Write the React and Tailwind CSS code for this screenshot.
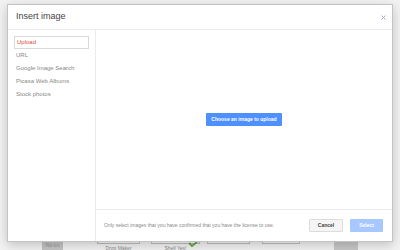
import React from "react";

const items = ["Upload", "URL", "Google Image Search", "Picasa Web Albums", "Stock photos"];

export default function App() {
  return (
    <div className="relative w-[400px] h-[250px] overflow-hidden bg-[#f2f2f2] font-['Liberation_Sans',Arial,sans-serif]">
      {/* page behind the dialog */}
      <div className="flex items-start pt-[236px] h-full text-[5px] text-[#888]">
        <div className="ml-[42px] w-[21px] h-[14px] bg-[#c4c4c4] flex items-end justify-center pb-[1px] text-[#999]">No on</div>
        <div className="ml-[34px] flex flex-col items-center">
          <div className="w-[43px] h-[8px] border border-[#bdbdbd] bg-[#f7f7f7]"></div>
          <span className="mt-[1px]">Drop Maker</span>
        </div>
        <div className="ml-[11px] relative flex flex-col items-center">
          <div className="w-[49px] h-[8px] border border-[#bdbdbd] bg-[#f7f7f7]"></div>
          <span className="mt-[1px]">Shell Yes!</span>
          <svg className="absolute right-[2px] top-[6px]" width="10" height="6" viewBox="0 0 10 6">
            <path d="M1 1 L4 4 L9 0" stroke="#6aa84f" strokeWidth="2" fill="none" />
          </svg>
        </div>
        <div className="ml-[7px] w-[43px] h-[8px] border border-[#bdbdbd] bg-[#f7f7f7]"></div>
        <div className="ml-[12px] w-[38px] h-[8px] border border-[#bdbdbd] bg-[#f7f7f7]"></div>
        <div className="ml-[34px] w-[24px] h-[14px] bg-[#c8c8c8]"></div>
      </div>

      {/* dialog */}
      <div className="absolute left-[7px] top-[4px] w-[386px] h-[238px] bg-white border border-[#c4c4c4] shadow-[0_3px_10px_rgba(0,0,0,0.2)] flex flex-col">
        <div className="h-[25px] shrink-0 flex items-center justify-between pl-[8px] pr-[6px] border-b border-[#ebebeb]">
          <span className="text-[9px] text-[#444]">Insert image</span>
          <svg width="5" height="5" viewBox="0 0 5 5">
            <path d="M0.5 0.5 L4.5 4.5 M4.5 0.5 L0.5 4.5" stroke="#a3b0c8" strokeWidth="1" />
          </svg>
        </div>
        <div className="flex flex-1 min-h-0">
          <div className="w-[88px] shrink-0 border-r border-[#ebebeb] pt-[6px] px-[6px]">
            {items.map((it, i) => (
              <div
                key={it}
                className={
                  i === 0
                    ? "h-[13px] flex items-center pl-[2px] border border-[#d9d9d9] text-[6px] text-[#dd4b39]"
                    : "h-[13px] flex items-center pl-[2px] text-[6px] text-[#888]"
                }
              >
                {it}
              </div>
            ))}
          </div>
          <div className="flex-1 flex flex-col">
            <div className="flex-1 flex items-center justify-center">
              <button className="h-[13px] px-[5px] bg-[#4d90fe] text-white text-[5px] font-bold rounded-[1px]">
                Choose an image to upload
              </button>
            </div>
            <div className="h-[32px] shrink-0 border-t border-[#ebebeb] flex items-center pl-[8px] pr-[9px]">
              <span className="flex-1 text-[5px] text-[#888]">
                Only select images that you have confirmed that you have the license to use.
              </span>
              <button className="h-[13px] w-[34px] bg-[#f5f5f5] border border-[#dcdcdc] text-[5px] font-bold text-[#444] rounded-[1px]">
                Cancel
              </button>
              <button className="ml-[7px] h-[13px] w-[33px] bg-[#a6c8ff] text-[5px] font-bold text-white rounded-[1px]">
                Select
              </button>
            </div>
          </div>
        </div>
      </div>
    </div>
  );
}
